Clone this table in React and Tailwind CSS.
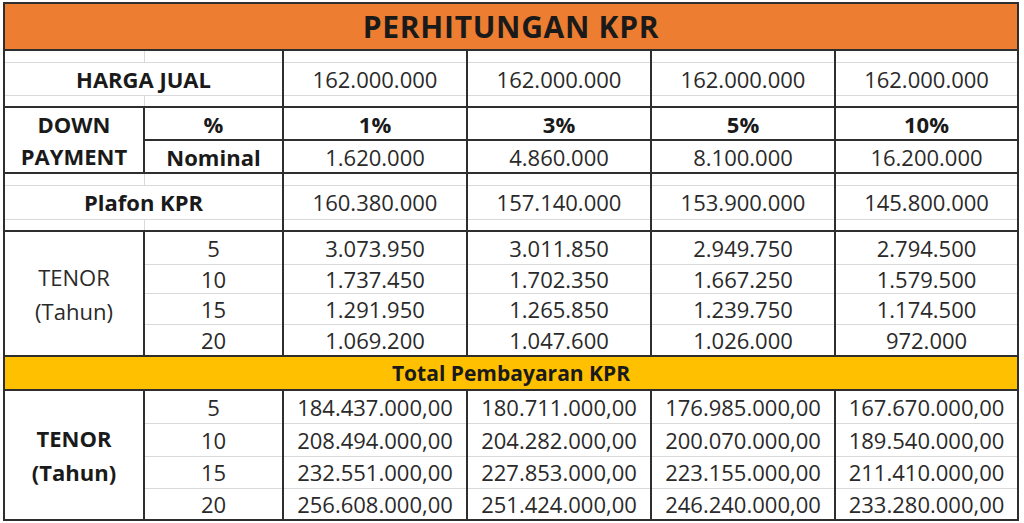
import React from 'react';

// border helpers: k = black line, g = light excel gridline
const S = {
    t: { k: 'border-t-2 border-t-[#2e2e2e]', g: 'border-t border-t-[#d9d9d9]' },
    r: { k: 'border-r-2 border-r-[#2e2e2e]', g: 'border-r border-r-[#d9d9d9]' },
    b: { k: 'border-b-2 border-b-[#2e2e2e]', g: 'border-b border-b-[#d9d9d9]' },
    l: { k: 'border-l-2 border-l-[#2e2e2e]', g: 'border-l border-l-[#d9d9d9]' },
};

const Td = ({ t = 'g', r = 'k', b = 'g', l = 'k', bold, className = '', children, ...rest }) => (
    <td
        {...rest}
        className={`${S.t[t]} ${S.r[r]} ${S.b[b]} ${S.l[l]} p-0 text-center align-middle leading-none ${
            bold ? 'font-bold text-[#1a1a1a]' : 'text-[#2a2a2a]'
        } ${className}`}
    >
        {children}
    </td>
);

const harga = ['162.000.000', '162.000.000', '162.000.000', '162.000.000'];
const persen = ['1%', '3%', '5%', '10%'];
const nominal = ['1.620.000', '4.860.000', '8.100.000', '16.200.000'];
const plafon = ['160.380.000', '157.140.000', '153.900.000', '145.800.000'];

const cicilan = [
    ['5', '3.073.950', '3.011.850', '2.949.750', '2.794.500'],
    ['10', '1.737.450', '1.702.350', '1.667.250', '1.579.500'],
    ['15', '1.291.950', '1.265.850', '1.239.750', '1.174.500'],
    ['20', '1.069.200', '1.047.600', '1.026.000', '972.000'],
];
const cicilanH = ['h-[33px]', 'h-[29px]', 'h-[31px]', 'h-[32px]'];

const total = [
    ['5', '184.437.000,00', '180.711.000,00', '176.985.000,00', '167.670.000,00'],
    ['10', '208.494.000,00', '204.282.000,00', '200.070.000,00', '189.540.000,00'],
    ['15', '232.551.000,00', '227.853.000,00', '223.155.000,00', '211.410.000,00'],
    ['20', '256.608.000,00', '251.424.000,00', '246.240.000,00', '233.280.000,00'],
];
const totalH = ['h-[33px]', 'h-[33px]', 'h-[32px]', 'h-[32px]'];

// thin spacer rows above / below a centered label (excel rows)
const SpacerRow = ({ top }) => (
    <tr className="h-[12px]">
        <Td t={top ? 'k' : 'g'} b={top ? 'g' : 'k'} r="g" />
        <Td t={top ? 'k' : 'g'} b={top ? 'g' : 'k'} l="g" />
        {[0, 1, 2, 3].map((i) => (
            <Td key={i} t={top ? 'k' : 'g'} b={top ? 'g' : 'k'} />
        ))}
    </tr>
);

const TenorBlock = ({ rows, heights, bold }) =>
    rows.map((row, i) => {
        const t = i === 0 ? 'k' : 'g';
        const b = i === rows.length - 1 ? 'k' : 'g';
        return (
            <tr key={row[0]} className={heights[i]}>
                {i === 0 && (
                    <Td rowSpan={4} t="k" b="k" bold={bold}>
                        <div className="leading-[34px]">
                            TENOR
                            <br />
                            (Tahun)
                        </div>
                    </Td>
                )}
                {row.map((v, j) => (
                    <Td key={j} t={t} b={b}>
                        {v}
                    </Td>
                ))}
            </tr>
        );
    });

export default function App() {
    return (
        <div className="w-[1024px] h-[523px] overflow-hidden bg-white pl-[3px] pt-[2px] font-['Open_Sans',sans-serif] text-[22px]">
            <table className="w-[1014px] table-fixed border-collapse">
                <colgroup>
                    <col className="w-[140px]" />
                    <col className="w-[139px]" />
                    <col className="w-[184px]" />
                    <col className="w-[184px]" />
                    <col className="w-[184px]" />
                    <col className="w-[183px]" />
                </colgroup>
                <tbody>
                    <tr className="h-[47px]">
                        <Td
                            colSpan={6}
                            t="k"
                            b="k"
                            bold
                            className="bg-[#ed7d31] text-[30px] tracking-[0.7px]"
                        >
                            PERHITUNGAN KPR
                        </Td>
                    </tr>

                    <SpacerRow top />
                    <tr className="h-[33px]">
                        <Td colSpan={2} bold>
                            HARGA JUAL
                        </Td>
                        {harga.map((v, i) => (
                            <Td key={i}>{v}</Td>
                        ))}
                    </tr>
                    <SpacerRow />

                    <tr className="h-[32px]">
                        <Td rowSpan={2} t="k" b="k" bold>
                            <div className="leading-[32px]">
                                DOWN
                                <br />
                                PAYMENT
                            </div>
                        </Td>
                        <Td t="k" b="k" bold>
                            %
                        </Td>
                        {persen.map((v, i) => (
                            <Td key={i} t="k" b="k" bold>
                                {v}
                            </Td>
                        ))}
                    </tr>
                    <tr className="h-[32px]">
                        <Td t="k" b="k" bold>
                            Nominal
                        </Td>
                        {nominal.map((v, i) => (
                            <Td key={i} t="k" b="k">
                                {v}
                            </Td>
                        ))}
                    </tr>

                    <SpacerRow top />
                    <tr className="h-[34px]">
                        <Td colSpan={2} bold>
                            Plafon KPR
                        </Td>
                        {plafon.map((v, i) => (
                            <Td key={i}>{v}</Td>
                        ))}
                    </tr>
                    <SpacerRow />

                    <TenorBlock rows={cicilan} heights={cicilanH} />

                    <tr className="h-[34px]">
                        <Td colSpan={6} t="k" b="k" bold className="bg-[#ffc000] text-[21px]">
                            Total Pembayaran KPR
                        </Td>
                    </tr>

                    <TenorBlock rows={total} heights={totalH} bold />
                </tbody>
            </table>
        </div>
    );
}
